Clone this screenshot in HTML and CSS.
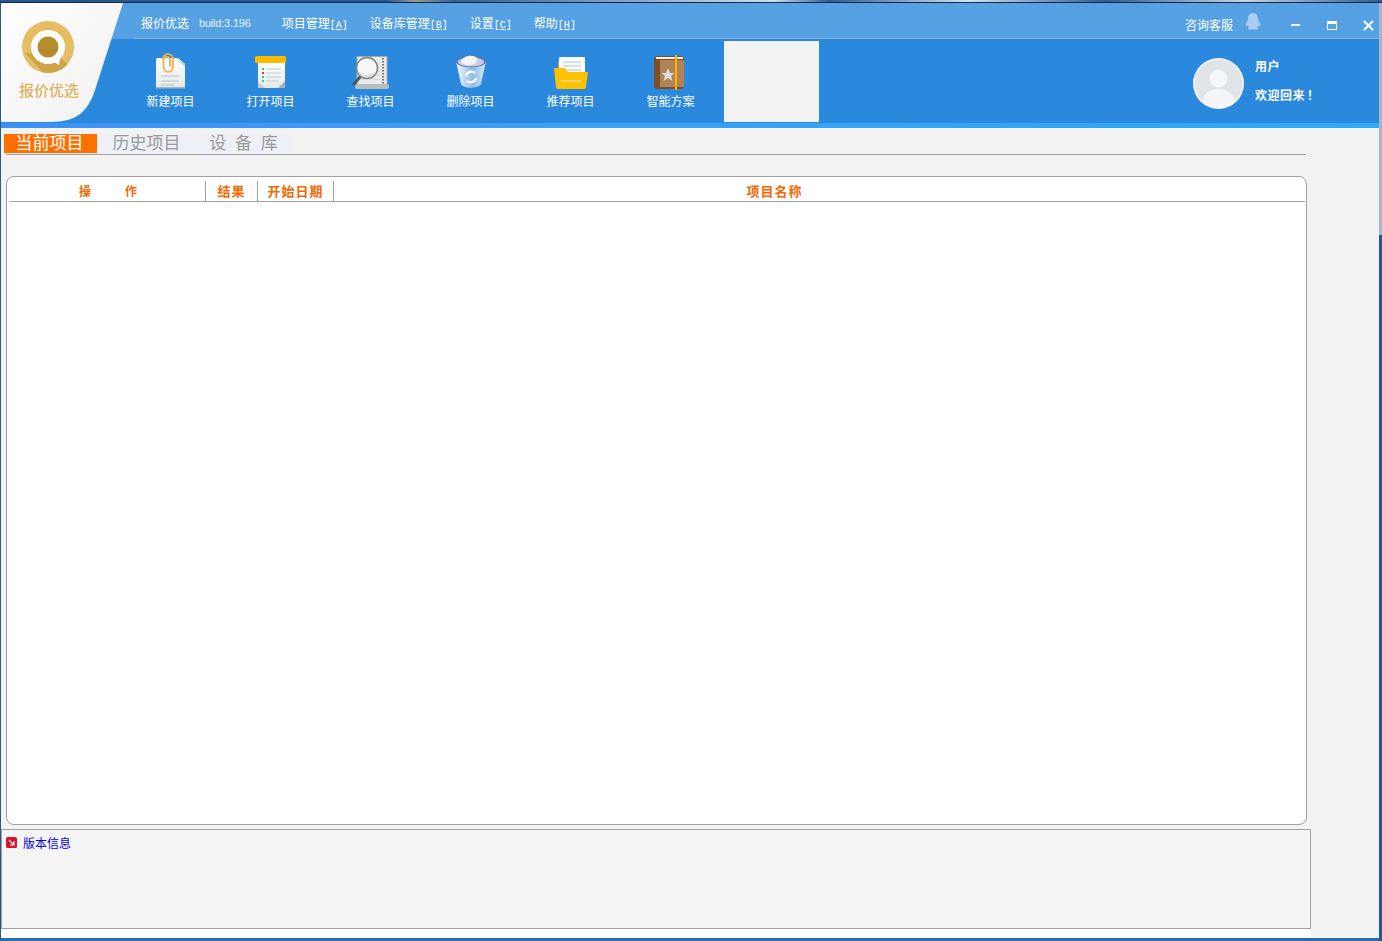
FILE: index.html
```html
<!DOCTYPE html>
<html lang="zh-CN">
<head>
<meta charset="utf-8">
<title>报价优选</title>
<link rel="stylesheet" href="styles.css">
</head>
<body>
<div class="desktop"></div>
<div class="frame">
  <div class="edge-left"></div>
  <div class="window">
    <div class="logo">
      <svg class="logo-art" width="123" height="119" viewBox="0 0 123 119">
        <defs>
          <linearGradient id="lg-bg" x1="0" y1="0" x2="1" y2="1"><stop offset="0" stop-color="#ffffff"/><stop offset="1" stop-color="#f0f0f0"/></linearGradient>
          <clipPath id="lg-ring"><circle cx="47" cy="44" r="26"/></clipPath>
        </defs>
        <path d="M0 0H122L94 87C87 108 76 119 50 119H0Z" fill="url(#lg-bg)"/>
        <circle cx="47" cy="44" r="26" fill="#e6bd62"/>
        <path d="M24 50L46 74L72 66L56 52Z" fill="#cfa348" clip-path="url(#lg-ring)"/>
        <circle cx="47" cy="44" r="17" fill="#ffffff"/>
        <path d="M53 59L59 56L58 62Z" fill="#ffffff"/>
        <circle cx="47" cy="44" r="10.500" fill="#b58c2d"/>
      </svg>
      <span class="logo-text">报价优选</span>
    </div>

    <header class="titlebar">
      <span class="app-name">报价优选</span>
      <span class="build">build:3.196</span>
      <nav class="menu">
        <span class="menu-item">项目管理<span class="key">[<u>A</u>]</span></span>
        <span class="menu-item">设备库管理<span class="key">[<u>B</u>]</span></span>
        <span class="menu-item">设置<span class="key">[<u>C</u>]</span></span>
        <span class="menu-item">帮助<span class="key">[<u>H</u>]</span></span>
      </nav>
      <div class="controls">
        <span class="service">咨询客服</span>
        <svg class="qq" width="16" height="18" viewBox="0 0 16 18"><path d="M8 0C4.500 0 3 2.500 3 5.500C3 7 2 8 1.200 10C.4 12 .8 13.500 1.500 13.300L2.800 12.200C3 13.300 3.500 14 4 14.600C2.800 15 2.500 15.800 3.500 16.300C5 16.800 7 16.500 8 16C9 16.500 11 16.800 12.500 16.300C13.500 15.800 13.200 15 12 14.600C12.500 14 13 13.300 13.200 12.200L14.500 13.300C15.200 13.500 15.600 12 14.800 10C14 8 13 7 13 5.500C13 2.500 11.500 0 8 0Z" fill="#a9cdf0"/></svg>
        <span class="win-min"></span>
        <span class="win-max"></span>
        <svg class="win-close" width="11" height="11" viewBox="0 0 11 11"><path d="M1 1L10 10M10 1L1 10" stroke="#ffffff" stroke-width="2"/></svg>
      </div>
    </header>

    <section class="toolbar">
      <div class="tool">
        <svg width="38" height="38" viewBox="0 0 38 38">
          <defs><linearGradient id="pg" x1="0" y1="0" x2="0" y2="1"><stop offset="0" stop-color="#ffffff"/><stop offset="1" stop-color="#e4e8e8"/></linearGradient></defs>
          <path d="M6 5H26L33 11V33C33 34.500 32.500 35 31 35H6C4.500 35 4 34.500 4 33V7C4 5.500 4.500 5 6 5Z" fill="url(#pg)"/>
          <path d="M24 5L33 11V14Z" fill="#c5cdcf"/>
          <rect x="4" y="34" width="29" height="1.500" fill="#aab3b5"/>
          <path d="M9 23H27M9 28H27M9 32H22" stroke="#b9c3c5" stroke-width="1"/>
          <path d="M11 6C11 -0.500 21 -0.500 21 6V14C21 20.500 11.500 20.500 11.500 14V6.500C11.500 3 18 3 18 6.500V13.500" fill="none" stroke="#efb14a" stroke-width="1.800"/>
        </svg>
        <span>新建项目</span>
      </div>
      <div class="tool">
        <svg width="38" height="38" viewBox="0 0 38 38">
          <rect x="6" y="9" width="27" height="26" fill="url(#pg)"/>
          <rect x="3" y="3" width="31" height="7" rx="1.500" fill="#ffbb00"/>
          <path d="M26 35L33 28V35Z" fill="#a8b0b2"/>
          <path d="M6 29V35H13Z" fill="#c5cbcd"/>
          <path d="M14 16H29M14 20H29M14 24H29M14 28H26" stroke="#c2cbcd" stroke-width="1"/>
          <rect x="10" y="15" width="2" height="2" fill="#2fc7a2"/>
          <rect x="10" y="19" width="2" height="2" fill="#d8352a"/>
          <rect x="10" y="23" width="2" height="2" fill="#2fc7a2"/>
          <rect x="10" y="27" width="2" height="2" fill="#2fc7a2"/>
        </svg>
        <span>打开项目</span>
      </div>
      <div class="tool">
        <svg width="38" height="38" viewBox="0 0 38 38">
          <rect x="5" y="3.500" width="30" height="29" fill="#e9ebea" stroke="#a5aaaa" stroke-width="1"/>
          <path d="M31 5V31" stroke="#777777" stroke-width="2" stroke-dasharray="1.500 1.500"/>
          <path d="M8 14H28M8 18H28M8 22H28M8 26H28" stroke="#d3d6d6" stroke-width="1"/>
          <rect x="3" y="31" width="34" height="5" rx="2" fill="#b9bebe"/>
          <path d="M8 24L2 31" stroke="#4f5558" stroke-width="3" stroke-linecap="round"/>
          <circle cx="15" cy="15" r="10.500" fill="#f8f8f8" stroke="#7d8385" stroke-width="1.500"/>
          <path d="M7 19C9 24 19 24 22 20" fill="none" stroke="#d6dada" stroke-width="2"/>
        </svg>
        <span>查找项目</span>
      </div>
      <div class="tool">
        <svg width="38" height="38" viewBox="0 0 38 38">
          <defs><linearGradient id="bin" x1="0" y1="0" x2="1" y2="0"><stop offset="0" stop-color="#f4f8fc"/><stop offset=".55" stop-color="#8fbde8"/><stop offset="1" stop-color="#dceaf6"/></linearGradient></defs>
          <path d="M4 8L9 31C12 36 26 36 29 31L34 8Z" fill="url(#bin)"/>
          <ellipse cx="19" cy="8.500" rx="15" ry="6" fill="#5f78b4"/>
          <ellipse cx="19" cy="9" rx="13" ry="4.500" fill="#c4cfe6"/>
          <path d="M9 9C11 2 21 1 25 5C26 9 23 12 17 12C13 12 10 11 9 9Z" fill="#f4f4f4"/>
          <path d="M14 23A5.500 5.500 0 0 1 23 20M24 25A5.500 5.500 0 0 1 15 28" fill="none" stroke="#ffffff" stroke-width="2.200"/>
        </svg>
        <span>删除项目</span>
      </div>
      <div class="tool">
        <svg width="38" height="38" viewBox="0 0 38 38">
          <path d="M6 9H32V22H6Z" fill="#ef8e1e"/>
          <rect x="7" y="4" width="26" height="20" rx="1" fill="#fbfcfc"/>
          <path d="M11 9H29M11 13H29M15 17H29" stroke="#cdd8da" stroke-width="1.500"/>
          <path d="M2 15H13L16 19H36L34 34C34 35.500 33 36 32 36H6C5 36 4.300 35.500 4 34Z" fill="#ffc200"/>
          <rect x="9" y="27" width="20" height="2" fill="#fbd27a"/>
        </svg>
        <span>推荐项目</span>
      </div>
      <div class="tool">
        <svg width="38" height="38" viewBox="0 0 38 38">
          <rect x="2" y="3" width="30" height="33" rx="3" fill="#7a4f28"/>
          <rect x="8" y="7" width="24" height="27" fill="#b18253"/>
          <rect x="4" y="4" width="27" height="2" fill="#f4f0ea"/>
          <rect x="23" y="2" width="2" height="35" fill="#ffb400"/>
          <path d="M16 15L18 20H22.500L19 23L20.500 28L16 25L11.500 28L13 23L9.500 20H14Z" fill="#dedede"/>
        </svg>
        <span>智能方案</span>
      </div>
      <div class="blank-panel"></div>
      <div class="user">
        <svg class="avatar" width="51" height="51" viewBox="0 0 51 51">
          <circle cx="25.500" cy="25.500" r="25.500" fill="#f6f7f8"/>
          <circle cx="25.500" cy="25.500" r="24" fill="#e0e4e7"/>
          <circle cx="25.500" cy="20.500" r="9" fill="#f4f6f7"/>
          <path d="M9 43C11 35 18 31 25.500 31C33 31 40 35 42 43C37.500 47.500 32 49.500 25.500 49.500C19 49.500 13.500 47.500 9 43Z" fill="#f4f6f7"/>
        </svg>
        <div class="user-text">
          <span>用户</span>
          <span>欢迎回来<span class="bang">！</span></span>
        </div>
      </div>
    </section>
    <div class="accent"></div>

    <main class="main">
      <div class="content">
        <div class="tabs">
          <span class="tab tab-active">当前项目</span>
          <span class="tab">历史项目</span>
          <span class="tab tab-spaced">设 备 库</span>
        </div>
        <div class="tabs-line"></div>
        <section class="table-box">
          <div class="table-head">
            <div class="cell cell-op"><span>操</span><span>作</span></div>
            <div class="cell">结果</div>
            <div class="cell">开始日期</div>
            <div class="cell cell-last">项目名称</div>
          </div>
        </section>
        <section class="info-box">
          <span class="info-row">
            <svg width="11" height="11" viewBox="0 0 11 11"><rect width="11" height="11" rx="1.500" fill="#e0182c"/><rect x="1.500" y="1.500" width="8" height="8" fill="#c8142a"/><path d="M3 3L7.500 7.500M8 4V8H4" fill="none" stroke="#ffffff" stroke-width="1.100"/></svg>
            <a class="info-link">版本信息</a>
          </span>
        </section>
        <div class="foot-strip"></div>
      </div>
      <div class="side"></div>
    </main>
  </div>
  <div class="edge-right"></div>
</div>
</body>
</html>
```

FILE: styles.css
```css
* { box-sizing: border-box; }
html, body { margin: 0; padding: 0; }
body {
  width: 1382px;
  height: 941px;
  overflow: hidden;
  display: flex;
  flex-direction: column;
  font-family: "Noto Sans CJK SC", "Liberation Sans", sans-serif;
  font-size: 12px;
  background: #1d4f8c;
}
.desktop {
  height: 3px;
  flex: none;
  background: linear-gradient(90deg, #2a568f 0 28%, #9a9a8c 30%, #33608f 33%, #cfe0ea 56%, #2f5c90 60%, #d4e2ea 70%, #2f5c90 80%, #c6d6de 90%, #2f5c90 100%);
  border-bottom: 1px solid #16284a;
}
.frame { flex: 1; display: flex; min-height: 0; }
.edge-left { width: 1px; flex: none; background: #2a5a80; }
.edge-right {
  width: 3px;
  flex: none;
  background: linear-gradient(180deg, #a9b6c8 0 232px, #1f5a9c 232px);
}
.window {
  position: relative;
  flex: 1;
  min-width: 0;
  display: flex;
  flex-direction: column;
  border-bottom: 3px solid #2a6cb0;
  background: #f2f2f2;
}

/* logo */
.logo { position: absolute; left: 0; top: 0; width: 123px; height: 119px; z-index: 2; }
.logo-art { display: block; }
.logo-text {
  position: absolute;
  left: 18px;
  top: 76px;
  font-size: 15px;
  line-height: 22px;
  font-weight: 500;
  color: #dcb55c;
  white-space: nowrap;
}

/* title bar */
.titlebar {
  height: 36px;
  flex: none;
  display: flex;
  align-items: center;
  padding: 4px 0 1px 140px;
  background: linear-gradient(90deg, #55a1e4 133px, #8fb3d2 133px) left bottom / 100% 1px no-repeat, #55a1e4;
  color: #ffffff;
  line-height: 16px;
}
.build {
  margin-left: 10px;
  font-family: "Liberation Sans", sans-serif;
  font-size: 11px;
  letter-spacing: -0.2px;
  color: #e8f1fa;
}
.menu { display: flex; margin: 3px 0 0 31px; }
.menu-item { margin-right: 22px; white-space: nowrap; }
.key { font-family: "Liberation Mono", monospace; font-size: 10px; }
.controls { margin-left: auto; display: flex; align-items: center; }
.service { margin-right: 12px; position: relative; top: 2px; }
.qq { margin-right: 30px; position: relative; top: -1px; }
.win-min { width: 9px; height: 2px; background: #ffffff; margin-right: 27px; position: relative; top: 2px; }
.win-max {
  width: 10px;
  height: 9px;
  border: 1px solid #ffffff;
  border-top-width: 3px;
  margin-right: 26px;
  position: relative;
  top: 3px;
}
.win-close { margin-right: 5px; position: relative; top: 3px; }

/* toolbar */
.toolbar {
  height: 84px;
  flex: none;
  display: flex;
  padding-left: 120px;
  background: #2a88dd;
  color: #ffffff;
}
.tool {
  width: 100px;
  padding-top: 14px;
  display: flex;
  flex-direction: column;
  align-items: center;
  line-height: 20px;
}
.tool svg { display: block; flex: none; }
.tool span { margin-left: -1px; }
.blank-panel {
  width: 95px;
  height: 81px;
  margin: 2px 0 0 3px;
  background: #f2f2f2;
}
.user { display: flex; margin-left: 374px; padding-top: 19px; }
.avatar { display: block; flex: none; }
.user-text {
  margin: 0 0 0 11px;
  display: flex;
  flex-direction: column;
  gap: 13px;
  font-weight: 700;
  letter-spacing: 0.5px;
  line-height: 16px;
}
.bang { margin-left: 2px; }
.accent {
  height: 5px;
  flex: none;
  background: linear-gradient(90deg, #3f8ff5, #38a0f7 40%, #2cabf8);
}

/* main */
.main { flex: 1; min-height: 0; display: flex; }
.content { width: 1310px; flex: none; display: flex; flex-direction: column; }
.side { flex: 1; background: #f2f2f2; }
.tabs { display: flex; gap: 4px; padding: 6px 0 0 3px; height: 26px; flex: none; }
.tab {
  width: 93px;
  height: 19px;
  padding-right: 2px;
  text-align: center;
  font-size: 17px;
  line-height: 15px;
  background: #eef0f8;
  color: #9a9a9a;
}
.tab-active { background: #ff6f00; color: #ffffff; }
.tab-spaced { word-spacing: 5px; }
.tabs-line { height: 1px; flex: none; margin: 0 5px 0 5px; background: #a0a0a0; }

.table-box {
  height: 649px;
  flex: none;
  margin: 21px 0 0 5px;
  width: 1301px;
  padding: 4px 1px 0 3px;
  background: #ffffff;
  border: 1px solid #a0a0a0;
  border-radius: 8px;
}
.table-head {
  height: 21px;
  display: grid;
  grid-template-columns: 196px 52px 76px 880px;
  border-bottom: 1px solid #a0a0a0;
}
.cell {
  height: 20px;
  text-align: center;
  font-size: 13px;
  font-weight: 700;
  letter-spacing: 1px;
  line-height: 20px;
  color: #f76600;
  border-right: 1px solid #a0a0a0;
}
.cell-op { display: flex; justify-content: center; gap: 34px; padding-left: 1px; font-size: 12px; letter-spacing: 0; }
.cell-last { border-right: 0; padding-left: 1px; }

.info-box {
  height: 100px;
  flex: none;
  margin-top: 4px;
  padding: 5px 0 0 4px;
  background: #f5f5f5;
  border: 1px solid #a0a0a0;
}
.info-row { display: flex; align-items: center; gap: 6px; line-height: 16px; }
.info-row svg { display: block; margin-top: -2px; }
.info-link { color: #0000ee; }
.foot-strip { flex: 1; background: #ffffff; }
```
